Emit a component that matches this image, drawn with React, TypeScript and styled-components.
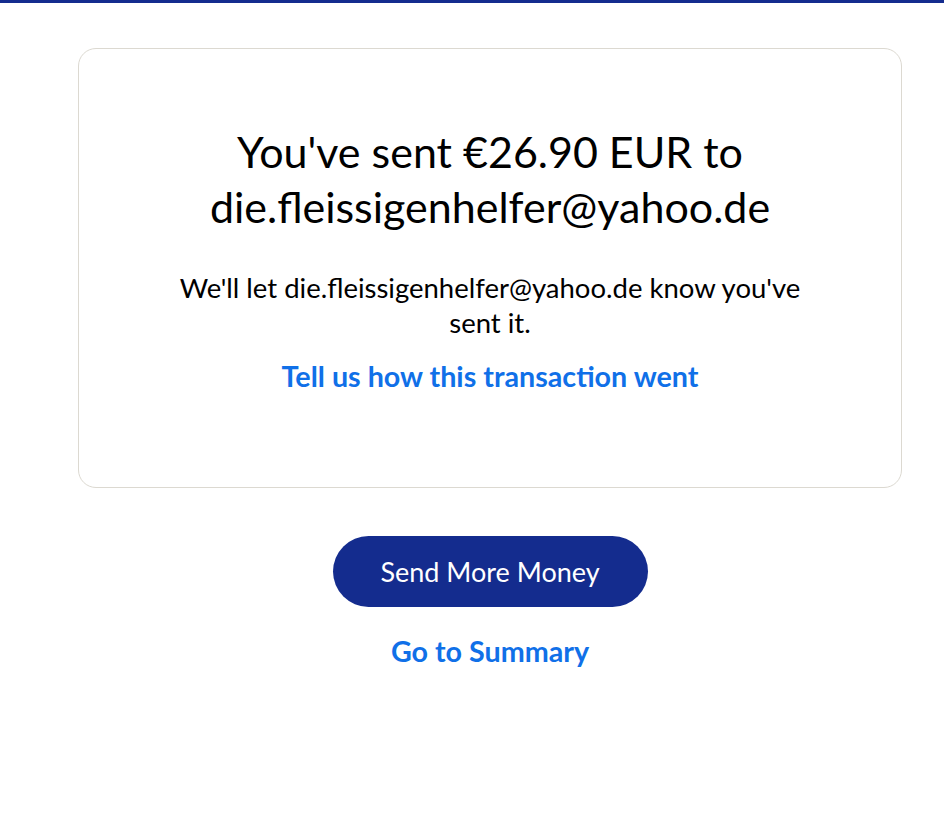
import React from 'react';
import styled, { createGlobalStyle } from 'styled-components';

const GlobalStyle = createGlobalStyle`
  html, body {
    margin: 0;
    padding: 0;
    background: #ffffff;
  }

  body {
    font-family: Lato, 'Open Sans', sans-serif;
    color: #000000;
  }
`;

const RECIPIENT = 'die.fleissigenhelfer@yahoo.de';

function App() {
  return (
    <>
      <GlobalStyle />
      <TopBar />
      <Main>
        <Card>
          <Title>
            You've sent €26.90 EUR to {RECIPIENT}
          </Title>
          <Message>We'll let {RECIPIENT} know you've sent it.</Message>
          <TextLink href="#">Tell us how this transaction went</TextLink>
        </Card>
        <Actions>
          <PrimaryButton type="button">Send More Money</PrimaryButton>
          <TextLink href="#">Go to Summary</TextLink>
        </Actions>
      </Main>
    </>
  );
}

export default App;

const TopBar = styled.div`
  height: 3px;
  background-color: #142c8e;
`;

const Main = styled.main`
  width: 824px;
  margin-left: 78px;
  padding-top: 45px;
  display: flex;
  flex-direction: column;
  align-items: center;
`;

const Card = styled.section`
  box-sizing: border-box;
  width: 100%;
  height: 440px;
  padding: 75px 60px 0;
  border: 1px solid #dcd9d1;
  border-radius: 18px;
  display: flex;
  flex-direction: column;
  align-items: center;
  text-align: center;
`;

const Title = styled.h1`
  max-width: 620px;
  margin: 0 0 36px;
  font-size: 43px;
  font-weight: 400;
  line-height: 55px;
`;

const Message = styled.p`
  max-width: 650px;
  margin: 0 0 18px;
  font-size: 27.5px;
  line-height: 35px;
`;

const TextLink = styled.a`
  font-size: 28.7px;
  font-weight: 700;
  line-height: 36px;
  color: #1070e8;
  text-decoration: none;
`;

const Actions = styled.div`
  margin-top: 48px;
  display: flex;
  flex-direction: column;
  align-items: center;
  gap: 26px;
`;

const PrimaryButton = styled.button`
  width: 315px;
  height: 71px;
  border: none;
  border-radius: 36px;
  background-color: #142c8e;
  color: #ffffff;
  font-family: inherit;
  font-size: 27px;
  font-weight: 400;
  cursor: pointer;
`;
